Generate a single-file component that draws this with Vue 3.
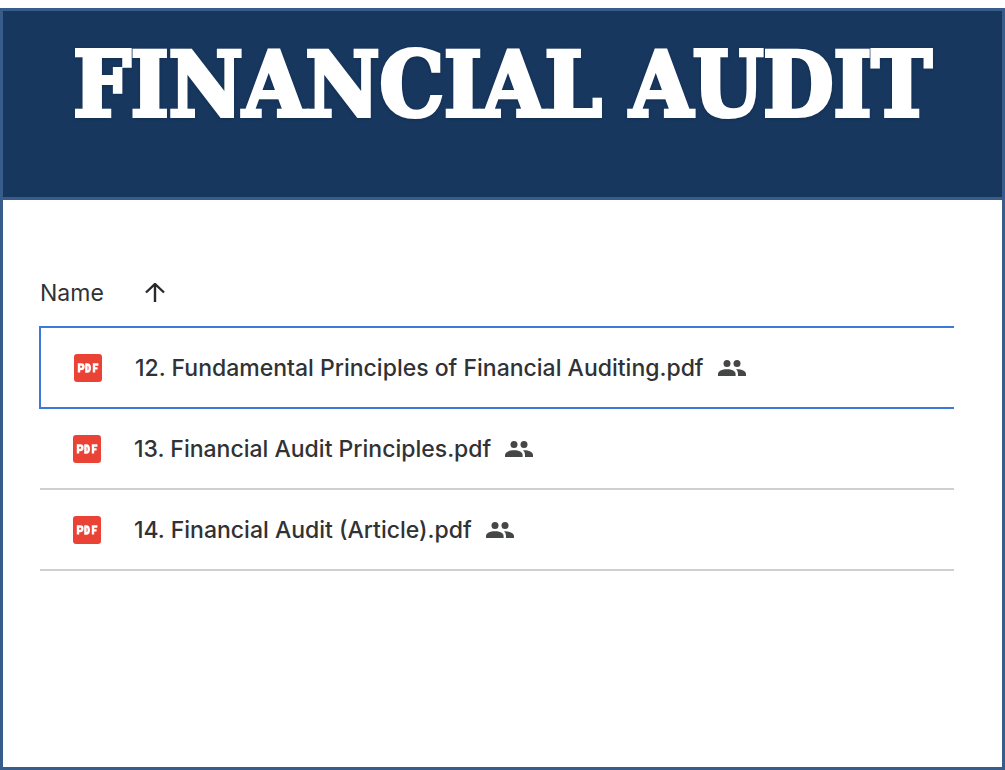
<script setup>
const files = [
  { name: '12. Fundamental Principles of Financial Auditing.pdf', selected: true },
  { name: '13. Financial Audit Principles.pdf', selected: false },
  { name: '14. Financial Audit (Article).pdf', selected: false },
]
</script>

<template>
  <div class="page">
    <div class="frame">
      <header class="banner">
        <h1>FINANCIAL AUDIT</h1>
      </header>
      <main class="content">
        <table class="files">
          <thead>
            <tr>
              <th scope="col">
                <button class="sort" type="button">
                  <span>Name</span>
                  <svg class="arrow" viewBox="0 0 20 20" aria-hidden="true">
                    <path d="M10 19V1M1 9.5L10 1L19 9.5" />
                  </svg>
                </button>
              </th>
            </tr>
          </thead>
          <tbody>
            <tr v-for="file in files" :key="file.name" :class="{ selected: file.selected }">
              <td>
                <div class="entry">
                  <svg class="pdf" viewBox="0 0 28 28" aria-hidden="true">
                    <rect width="28" height="28" rx="3" fill="#ea4335" />
                    <path
                      d="M5 18.5V10.5H7.2A1.9 1.9 0 0 1 7.2 15H5M12.4 10.5V17.5H13.4Q15.8 17.5 15.8 14T13.4 10.5ZM20 18.5V10.5H24.4M20 14.4H23.6"
                      fill="none" stroke="#fff" stroke-width="2.4"
                    />
                  </svg>
                  <span class="name">{{ file.name }}</span>
                  <svg class="people" viewBox="0 0 28 16" aria-hidden="true">
                    <circle cx="9" cy="3.6" r="3.5" />
                    <circle cx="19" cy="3.6" r="3.5" />
                    <path d="M0 16V14C0 11 4 9.2 9 9.2S17.6 11 17.6 14V16Z" />
                    <path d="M18 9.2C23.6 9 28 11 28 14V16H20V14C20 12 19.4 10.4 18 9.2Z" />
                  </svg>
                </div>
              </td>
            </tr>
          </tbody>
        </table>
      </main>
    </div>
  </div>
</template>

<style>
body {
  margin: 0;
  background: #fff;
}
</style>

<style scoped>
.page {
  box-sizing: border-box;
  display: flex;
  min-height: 100vh;
  padding-top: 8px;
  font-family: Inter, Roboto, sans-serif;
  color: #303235;
}

.frame {
  flex: 1;
  border: 3px solid #385d8a;
}

.banner {
  box-sizing: border-box;
  min-height: 189px;
  padding-top: 24px;
  border-bottom: 3px solid #385d8a;
  background: #18375e;
  text-align: center;
}

h1 {
  margin: 0;
  font-family: "DejaVu Serif Condensed", "DejaVu Serif", serif;
  font-size: 90px;
  font-weight: 700;
  line-height: 98px;
  white-space: nowrap;
  color: #fff;
  -webkit-text-stroke: 4px #fff;
  text-shadow: 0 1px 4px #0a1c36;
}

.content {
  padding: 60px 48px 0 36px;
}

.files {
  width: 100%;
  border-collapse: collapse;
  font-size: 23px;
  line-height: 32px;
}

th {
  height: 66px;
  padding: 0;
  font-weight: 400;
  text-align: left;
}

.sort {
  display: flex;
  align-items: center;
  gap: 41px;
  padding: 0;
  border: 0;
  background: none;
  font: inherit;
  color: inherit;
  cursor: pointer;
}

.arrow {
  width: 20px;
  height: 20px;
  fill: none;
  stroke: #27292c;
  stroke-width: 2.4;
}

td {
  height: 79px;
  padding: 0;
  border-bottom: 2px solid #d0d0d0;
}

.selected td {
  border: 2px solid #3f78d8;
  border-right: 0;
}

.entry {
  display: flex;
  align-items: center;
  padding-left: 33px;
  font-weight: 500;
}

.pdf {
  width: 28px;
  height: 28px;
  margin-right: 33px;
}

.people {
  width: 28px;
  height: 16px;
  margin-left: 14px;
  fill: #444746;
}
</style>
